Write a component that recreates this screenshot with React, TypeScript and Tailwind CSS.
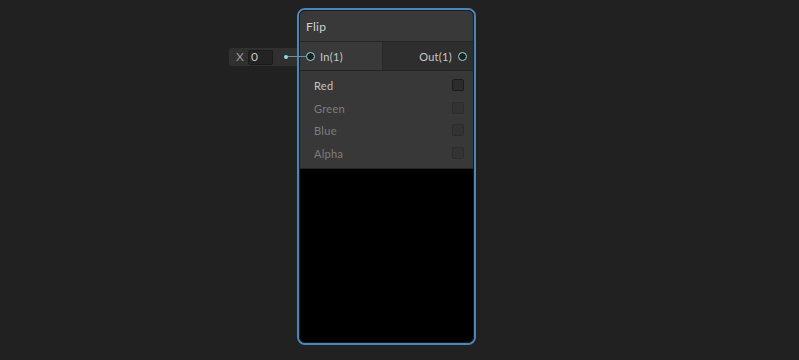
import React from 'react';

const channels = [
  { name: 'Red', on: true },
  { name: 'Green', on: false },
  { name: 'Blue', on: false },
  { name: 'Alpha', on: false },
];

function Port() {
  return <div className="w-[9px] h-[9px] rounded-full border-[1.5px] border-[#8fdce4] bg-[#1e1e1e] shrink-0" />;
}

export default function App() {
  return (
    <div
      className="w-[799px] h-[360px] bg-[#212121] flex pt-[8px] overflow-hidden text-[11px] tracking-[0.3px]"
      style={{ fontFamily: 'Lato, "Open Sans", sans-serif' }}
    >
      {/* inline value field for the input port */}
      <div className="ml-[229px] mt-[40px] relative h-[18px] w-[68px] bg-[#303030] rounded-l-[2px] flex items-center">
        <span className="ml-[7px] text-[#9a9a9a] text-[12px]">X</span>
        <div className="ml-[4px] w-[25px] h-[15px] bg-[#232323] border border-[#1b1b1b] rounded-[2px] flex items-center pl-[2px] text-[12px] text-[#c8c8c8]">
          0
        </div>
        <div className="absolute left-[55px] top-[7px] w-[4px] h-[4px] rounded-full bg-[#8fdce4]" />
        <div className="absolute left-[59px] top-[8px] w-[18px] h-[1px] bg-[#5e9aa2] z-10" />
      </div>

      {/* node */}
      <div className="w-[179px] h-[337px] rounded-[8px] border-2 border-[#4a86ba] bg-[#1a1a1a]">
        <div className="w-full h-full rounded-[6px] border border-[#1c1c1c] overflow-hidden flex flex-col">
          <div className="h-[31px] bg-[#393939] flex items-center pl-[6px] pt-[2px] text-[12px] text-[#d0d0d0] border-b border-[#262626]">
            Flip
          </div>
          <div className="h-[29px] flex border-b border-[#262626]">
            <div className="w-[83px] bg-[#393939] border-r border-[#2a2a2a] flex items-center pl-[6px] gap-[5px] text-[#c8c8c8]">
              <Port />
              <span className="pt-[3px]">In(1)</span>
            </div>
            <div className="flex-1 bg-[#2e2e2e] flex items-center justify-end pr-[6px] gap-[6px] text-[#c8c8c8]">
              <span className="pt-[3px]">Out(1)</span>
              <Port />
            </div>
          </div>
          <div className="bg-[#383838] pt-[3px] pb-[4px] border-b border-[#262626]">
            {channels.map((c) => (
              <div key={c.name} className="h-[22.5px] flex items-center justify-between pl-[14px] pr-[9px]">
                <span className={c.on ? 'pt-[2px] text-[#c4c4c4]' : 'pt-[2px] text-[#7d7d7d]'}>{c.name}</span>
                <div
                  className={
                    c.on
                      ? 'w-[12px] h-[12px] rounded-[2px] bg-[#2c2c2c] border border-[#1c1c1c]'
                      : 'w-[12px] h-[12px] rounded-[2px] bg-[#333333] border border-[#2c2c2c]'
                  }
                />
              </div>
            ))}
          </div>
          <div className="flex-1 bg-black" />
        </div>
      </div>
    </div>
  );
}
